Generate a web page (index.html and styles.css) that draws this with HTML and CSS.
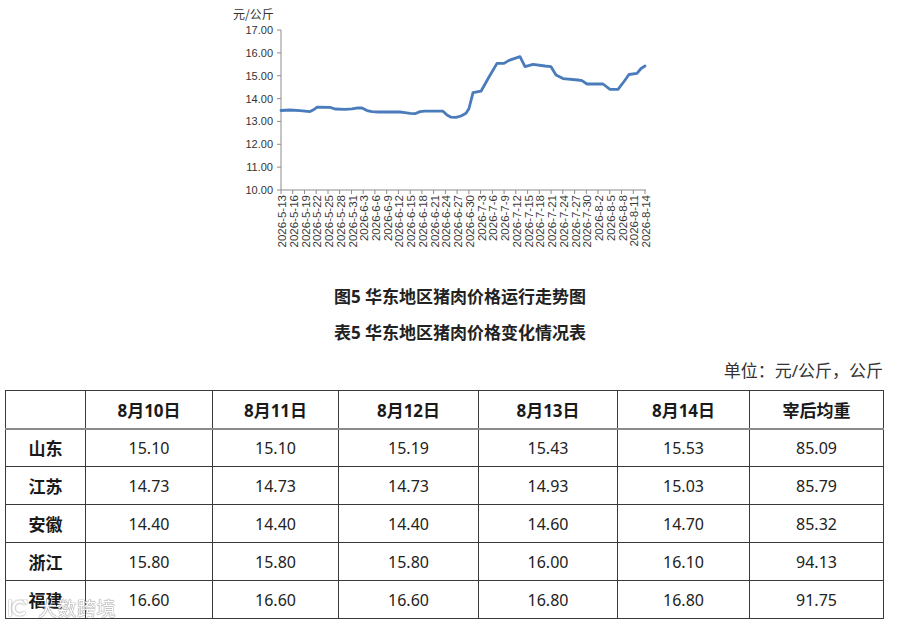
FILE: index.html
```html
<!DOCTYPE html>
<html lang="zh-CN">
<head>
<meta charset="utf-8">
<title>华东地区猪肉价格</title>
<link rel="stylesheet" href="styles.css">
</head>
<body>
<div class="page">
  <svg class="chart" width="900" height="279" viewBox="0 0 900 279" xmlns="http://www.w3.org/2000/svg">
    <text class="unit-label" x="233" y="19">元/公斤</text>
    <g class="ylabels">
      <text x="273" y="34">17.00</text>
      <text x="273" y="56.9">16.00</text>
      <text x="273" y="79.7">15.00</text>
      <text x="273" y="102.6">14.00</text>
      <text x="273" y="125.4">13.00</text>
      <text x="273" y="148.3">12.00</text>
      <text x="273" y="171.1">11.00</text>
      <text x="273" y="194">10.00</text>
    </g>
    <path class="axis" d="M281 30V190H646M277 30H281M277 52.9H281M277 75.7H281M277 98.6H281M277 121.4H281M277 144.3H281M277 167.1H281M277 190H281
      M281 190v4M292.7 190v4M304.5 190v4M316.2 190v4M328 190v4M339.7 190v4M351.5 190v4M363.2 190v4M374.9 190v4M386.7 190v4M398.4 190v4M410.2 190v4M421.9 190v4M433.6 190v4M445.4 190v4M457.1 190v4M468.9 190v4M480.6 190v4M492.4 190v4M504.1 190v4M515.8 190v4M527.6 190v4M539.3 190v4M551.1 190v4M562.8 190v4M574.6 190v4M586.3 190v4M598 190v4M609.8 190v4M621.5 190v4M633.3 190v4M645 190v4"/>
    <polyline class="line" points="281,110.5 290,110 300,110.6 310,111.6 314,109.5 317,107.2 330,107.4 335,109 345,109.4 352,108.8 358,107.8 362,108 367,110.6 372,111.7 378,112 400,112 405,112.6 410,113.3 415,113.7 420,111.6 425,111.2 443,111.2 447,115 451,117.2 456,117.3 461,116 466,113.3 469,108.5 473,92.7 481,91.2 489,77 497,63.4 504,63.4 509,60.4 520,56.7 525,66.7 533,64.3 545,66 551,66.7 556,75 563,78.6 578,80 582,80.6 587,84 603,84 610,89.3 618,89.3 624,81.5 629,74.5 637,73.4 641,68.5 645,66"/>
    <g class="xlabels">
      <text transform="translate(286,195) rotate(-90)">2026-5-13</text>
      <text transform="translate(297.7,195) rotate(-90)">2026-5-16</text>
      <text transform="translate(309.5,195) rotate(-90)">2026-5-19</text>
      <text transform="translate(321.2,195) rotate(-90)">2026-5-22</text>
      <text transform="translate(333,195) rotate(-90)">2026-5-25</text>
      <text transform="translate(344.7,195) rotate(-90)">2026-5-28</text>
      <text transform="translate(356.5,195) rotate(-90)">2026-5-31</text>
      <text transform="translate(368.2,195) rotate(-90)">2026-6-3</text>
      <text transform="translate(379.9,195) rotate(-90)">2026-6-6</text>
      <text transform="translate(391.7,195) rotate(-90)">2026-6-9</text>
      <text transform="translate(403.4,195) rotate(-90)">2026-6-12</text>
      <text transform="translate(415.2,195) rotate(-90)">2026-6-15</text>
      <text transform="translate(426.9,195) rotate(-90)">2026-6-18</text>
      <text transform="translate(438.6,195) rotate(-90)">2026-6-21</text>
      <text transform="translate(450.4,195) rotate(-90)">2026-6-24</text>
      <text transform="translate(462.1,195) rotate(-90)">2026-6-27</text>
      <text transform="translate(473.9,195) rotate(-90)">2026-6-30</text>
      <text transform="translate(485.6,195) rotate(-90)">2026-7-3</text>
      <text transform="translate(497.4,195) rotate(-90)">2026-7-6</text>
      <text transform="translate(509.1,195) rotate(-90)">2026-7-9</text>
      <text transform="translate(520.8,195) rotate(-90)">2026-7-12</text>
      <text transform="translate(532.6,195) rotate(-90)">2026-7-15</text>
      <text transform="translate(544.3,195) rotate(-90)">2026-7-18</text>
      <text transform="translate(556.1,195) rotate(-90)">2026-7-21</text>
      <text transform="translate(567.8,195) rotate(-90)">2026-7-24</text>
      <text transform="translate(579.6,195) rotate(-90)">2026-7-27</text>
      <text transform="translate(591.3,195) rotate(-90)">2026-7-30</text>
      <text transform="translate(603,195) rotate(-90)">2026-8-2</text>
      <text transform="translate(614.8,195) rotate(-90)">2026-8-5</text>
      <text transform="translate(626.5,195) rotate(-90)">2026-8-8</text>
      <text transform="translate(638.3,195) rotate(-90)">2026-8-11</text>
      <text transform="translate(650,195) rotate(-90)">2026-8-14</text>
    </g>
  </svg>

  <div class="titles">
    <div class="title">图5 华东地区猪肉价格运行走势图</div>
    <div class="title">表5 华东地区猪肉价格变化情况表</div>
  </div>

  <div class="unit">单位：元/公斤，公斤</div>

  <table class="data">
    <colgroup>
      <col class="c-region">
      <col class="c-d1">
      <col class="c-d2">
      <col class="c-d3">
      <col class="c-d4">
      <col class="c-d5">
      <col class="c-w">
    </colgroup>
    <thead>
      <tr>
        <th></th>
        <th>8月10日</th>
        <th>8月11日</th>
        <th>8月12日</th>
        <th>8月13日</th>
        <th>8月14日</th>
        <th>宰后均重</th>
      </tr>
    </thead>
    <tbody>
      <tr><th>山东</th><td>15.10</td><td>15.10</td><td>15.19</td><td>15.43</td><td>15.53</td><td>85.09</td></tr>
      <tr><th>江苏</th><td>14.73</td><td>14.73</td><td>14.73</td><td>14.93</td><td>15.03</td><td>85.79</td></tr>
      <tr><th>安徽</th><td>14.40</td><td>14.40</td><td>14.40</td><td>14.60</td><td>14.70</td><td>85.32</td></tr>
      <tr><th>浙江</th><td>15.80</td><td>15.80</td><td>15.80</td><td>16.00</td><td>16.10</td><td>94.13</td></tr>
      <tr><th>福建</th><td>16.60</td><td>16.60</td><td>16.60</td><td>16.80</td><td>16.80</td><td>91.75</td></tr>
    </tbody>
  </table>

  <div class="watermark">
    <svg class="wm-logo" width="20" height="18" viewBox="0 0 20 18" xmlns="http://www.w3.org/2000/svg">
      <path d="M2 2V16" />
      <path d="M16 4A6.5 6.5 0 1 0 16 14" />
      <path d="M17 1.5L18.5 3.5" />
    </svg>
    <span class="wm-text">大数跨境</span>
  </div>
</div>
</body>
</html>
```

FILE: styles.css
```css
html, body {
  margin: 0;
  padding: 0;
  background: #ffffff;
}

body {
  font-family: "Noto Sans", "Noto Sans CJK SC", sans-serif;
  color: #1f1f1f;
}

.page {
  position: relative;
  width: 900px;
  height: 626px;
  overflow: hidden;
}

.chart {
  display: block;
}

.unit-label {
  font-family: "Noto Sans CJK SC", sans-serif;
  font-size: 12px;
  fill: #333333;
}

.ylabels text {
  font-family: "Liberation Sans", "Noto Sans", sans-serif;
  font-size: 11px;
  fill: #333333;
  text-anchor: end;
}

.xlabels text {
  font-family: "Liberation Sans", "Noto Sans", sans-serif;
  font-size: 11.5px;
  fill: #3a3a3a;
  text-anchor: end;
}

.axis {
  fill: none;
  stroke: #8c8c8c;
  stroke-width: 1;
}

.line {
  fill: none;
  stroke: #4a7cbb;
  stroke-width: 2.8;
  stroke-linejoin: round;
  stroke-linecap: round;
}

.titles {
  padding-left: 20px;
}

.title {
  height: 36px;
  line-height: 36px;
  text-align: center;
  font-size: 17px;
  font-weight: bold;
  color: #222222;
}

.unit {
  margin-top: 9px;
  height: 22px;
  line-height: 22px;
  padding-right: 17px;
  text-align: right;
  font-size: 17px;
  color: #333333;
}

.data {
  margin: 8px 0 0 5px;
  width: 879px;
  border-collapse: collapse;
  table-layout: fixed;
}

.c-region { width: 80px; }
.c-d1 { width: 127px; }
.c-d2 { width: 126px; }
.c-d3 { width: 140px; }
.c-d4 { width: 139px; }
.c-d5 { width: 132px; }
.c-w { width: 134px; }

.data tr {
  height: 38px;
}

.data th,
.data td {
  border: 1px solid #3a3a3a;
  padding: 0;
  text-align: center;
  vertical-align: middle;
}

.data th {
  font-size: 17px;
  font-weight: bold;
  color: #1a1a1a;
}

.data td {
  font-size: 16px;
  color: #222222;
}

.data thead th {
  border-bottom: 2px solid #8a8a8a;
}

.watermark {
  position: absolute;
  left: 8px;
  top: 597px;
  display: flex;
  align-items: center;
  gap: 10px;
  opacity: 0.95;
}

.wm-logo path {
  fill: none;
  stroke: #ffffff;
  stroke-width: 2.6;
  stroke-linecap: round;
  filter: drop-shadow(0 0 0.8px #8a8a8a);
}

.wm-text {
  font-family: "Noto Sans CJK SC", sans-serif;
  font-size: 19px;
  line-height: 22px;
  color: #ffffff;
  letter-spacing: 0.5px;
  text-shadow: 0 0 1px #888888, 0 0 1px #888888, 0 0 1px #888888;
}
```
